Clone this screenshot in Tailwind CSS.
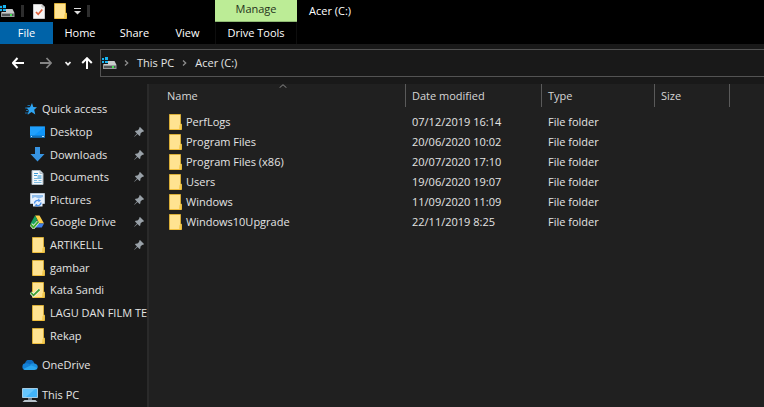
<!DOCTYPE html>
<html lang="en">
<head>
  <meta charset="UTF-8" />
  <meta name="viewport" content="width=device-width, initial-scale=1.0" />
  <title>Acer (C:)</title>
  <script src="https://cdn.jsdelivr.net/npm/@tailwindcss/browser@4"></script>
</head>
<body class="flex h-screen flex-col overflow-hidden bg-[#191919] font-['Open_Sans',sans-serif] text-[11px] leading-4 text-[#e4e4e4]">

  <!-- Shared icons -->
  <svg class="hidden" aria-hidden="true">
    <symbol id="folder" viewBox="0 0 13 16">
      <path d="M.5 .5H11.500V10L12.500 10.500V15.500H.5Z" fill="#ffe391" stroke="#d9ae38" />
      <path d="M10.500 11L12.500 9.500V15.500H10Z" fill="#f3c94e" />
      <path d="M1 15.500H12" stroke="#f0be3c" />
    </symbol>
    <symbol id="pin" viewBox="0 0 10 10">
      <path d="M6 0L10 4L9 5L8.300 4.700L6.500 6.500L6.300 8.500L5.500 9L3.500 7L.5 9.800L.2 9.500L3 6.500L1 4.500L1.500 3.700L3.500 3.500L5.300 1.700L5 1Z" fill="#99a1a8" />
    </symbol>
    <symbol id="drive" viewBox="0 0 15 13">
      <path d="M4 4H12.500L14.500 8H1Z" fill="#c9cbcc" />
      <path d="M1 8H14.500V12H1Z" fill="#97999b" />
      <path d="M2 9H13.500V11H2Z" fill="#4f5355" />
      <path d="M10 9H12V11H10Z" fill="#41e052" />
      <path d="M0 0H6V7H0Z" fill="#12181b" />
      <path d="M0 1H2V3H0ZM3 0H6V3H3ZM0 4H2V6H0ZM3 4H6V6H3Z" fill="#16b4f2" />
    </symbol>
    <symbol id="chevron" viewBox="0 0 5 6">
      <path d="M1 .5L3.700 3L1 5.500" fill="none" stroke="#8d8d8d" stroke-width="1.300" />
    </symbol>
  </svg>

  <header class="flex h-11 shrink-0 bg-black">
    <div class="flex w-[215px] flex-col">
      <div class="flex h-[22px] items-center">
        <svg class="h-[13px] w-[15px]"><use href="#drive" /></svg>
        <span class="ml-1.5 h-3 w-[3px] bg-[#2d2d2d]"></span>
        <button class="ml-[9px]" aria-label="Properties">
          <svg class="block h-[15px] w-3" viewBox="0 0 12 15">
            <path d="M.5 .5H9L11.500 3V14.500H.5Z" fill="#f5f5f5" stroke="#c8c8c8" />
            <path d="M9 .5V3H11.500" fill="none" stroke="#b5b5b5" />
            <path d="M3 8L5.200 10.300L9.300 5.500" fill="none" stroke="#e0603a" stroke-width="1.700" />
          </svg>
        </button>
        <button class="ml-[9px]" aria-label="New folder">
          <svg class="block h-4 w-[13px]"><use href="#folder" /></svg>
        </button>
        <button class="ml-[7px]" aria-label="Customize Quick Access Toolbar">
          <svg class="block h-[7px] w-[7px]" viewBox="0 0 7 7">
            <path d="M0 .5H7" stroke="#ddd" />
            <path d="M0 3H7L3.500 6.500Z" fill="#ddd" />
          </svg>
        </button>
        <span class="ml-1.5 h-3 w-[3px] bg-[#2d2d2d]"></span>
      </div>
      <div class="flex h-[22px] items-stretch text-white">
        <button class="w-[53px] bg-[#0063a8]">File</button>
        <button class="w-[54px]">Home</button>
        <button class="w-[55px]">Share</button>
        <button class="w-[51px]">View</button>
      </div>
    </div>
    <div class="flex w-[82px] flex-col">
      <button class="h-[22px] border-b border-[#8fb974] bg-[#bcec96] pb-[3px] text-[#26331c]">Manage</button>
      <button class="h-[22px] border-x border-[#0e0e0e] text-white">Drive Tools</button>
    </div>
    <h1 class="pt-[3px] pl-3 text-white">Acer (C:)</h1>
  </header>

  <div class="flex h-10 shrink-0 items-center pt-[5px] pb-[7px]">
    <div class="flex w-[100px] items-center pl-3">
      <button aria-label="Back">
        <svg class="block h-3 w-3" viewBox="0 0 12 12"><path d="M12 6H1M5.500 1L.9 6L5.500 11" fill="none" stroke="#fff" stroke-width="2" /></svg>
      </button>
      <button class="ml-4" aria-label="Forward">
        <svg class="block h-3 w-3" viewBox="0 0 12 12"><path d="M0 6H11M6.500 1L11.100 6L6.500 11" fill="none" stroke="#858585" stroke-width="1.800" /></svg>
      </button>
      <button class="ml-[13px]" aria-label="Recent locations">
        <svg class="block h-[5px] w-1.5" viewBox="0 0 6 5"><path d="M.5 1L3 3.700L5.500 1" fill="none" stroke="#eee" stroke-width="1.700" /></svg>
      </button>
      <button class="ml-2.5" aria-label="Up">
        <svg class="block h-3 w-3" viewBox="0 0 12 12"><path d="M6 12V1.200M1.200 6L6 1.200L10.800 6" fill="none" stroke="#fff" stroke-width="2" /></svg>
      </button>
    </div>
    <nav class="flex h-7 flex-1 items-center border-y border-l border-[#535353] pl-px" aria-label="Address">
      <svg class="h-[13px] w-[15px]"><use href="#drive" /></svg>
      <svg class="ml-[7px] h-1.5 w-[5px]"><use href="#chevron" /></svg>
      <a href="#" class="ml-2">This PC</a>
      <svg class="ml-2 h-1.5 w-[5px]"><use href="#chevron" /></svg>
      <a href="#" class="ml-2">Acer (C:)</a>
    </nav>
  </div>

  <div class="flex min-h-0 flex-1">
    <aside class="w-[149px] shrink-0 overflow-hidden border-r-2 border-[#2a2a2a] pt-3.5">
      <ul class="grid h-[249px] auto-rows-fr items-center">
        <li>
          <a href="#" class="flex items-center pl-[25px]">
            <svg class="h-3 w-3" viewBox="0 0 12 12">
              <path d="M7 0L8.300 3.900L12 4.200L9.200 6.800L10.300 11.500L6.500 9.100L2.700 11.800L3.900 7.300L1.200 4.800L5 4.200Z" fill="#2fa5f2" />
              <path d="M0 5H3M1 7.500H3.500M0 10H3M2.500 2.500H5" stroke="#1a6ba5" />
            </svg>
            <span class="ml-[5px]">Quick access</span>
          </a>
        </li>
        <li>
          <a href="#" class="flex items-center pr-0.5 pl-[30px]">
            <svg class="h-3 w-[15px]" viewBox="0 0 15 12">
              <path d="M0 .5H15V11.500H0Z" fill="#0f96fb" />
              <path d="M0 .5H15L4 9.500H0Z" fill="#2ba6ff" fill-opacity=".6" />
              <path d="M0 10.500H15" stroke="#1272bd" stroke-width="2" />
              <path d="M1 10.500H2M12 10.500H14" stroke="#b9e2ff" />
            </svg>
            <span class="ml-[5px] flex-1">Desktop</span>
            <svg class="mr-px h-2.5 w-2.5"><use href="#pin" /></svg>
          </a>
        </li>
        <li>
          <a href="#" class="flex items-center pr-0.5 pl-[30px]">
            <svg class="h-[15px] w-[15px]" viewBox="0 0 15 15"><path d="M5 0H10V7H14.500L7.500 14.500L.5 7H5Z" fill="#3794e2" /></svg>
            <span class="ml-[5px] flex-1">Downloads</span>
            <svg class="mr-px h-2.5 w-2.5"><use href="#pin" /></svg>
          </a>
        </li>
        <li>
          <a href="#" class="flex items-center pr-0.5 pl-[30px]">
            <svg class="h-[15px] w-[15px]" viewBox="0 0 15 15">
              <path d="M2 .5H10L13 3.500V14.500H2Z" fill="#f4f8fb" stroke="#a9b6c0" />
              <path d="M10 .5V3.500H13" fill="#d3dce3" stroke="#a9b6c0" />
              <path d="M4 3.500H8M4 5.500H7" stroke="#3d9bd7" />
              <path d="M7.500 5H11.500V8H7.500Z" fill="#8cc4e6" />
              <path d="M4 8.500H11.500M4 10.500H7M8.500 10.500H11.500M4 12.500H11.500" stroke="#7dbbe0" />
            </svg>
            <span class="ml-[5px] flex-1">Documents</span>
            <svg class="mr-px h-2.5 w-2.5"><use href="#pin" /></svg>
          </a>
        </li>
        <li>
          <a href="#" class="flex items-center pr-0.5 pl-[30px]">
            <svg class="h-3.5 w-[15px]" viewBox="0 0 15 14">
              <path d="M.5 .5H14.500V10.500H.5Z" fill="#e9f1fb" stroke="#b7c4d2" />
              <path d="M2 2H13V4L9 5.500L5 4L2 5.500Z" fill="#8fbdec" />
              <path d="M3 6H12.500V13.500H3Z" fill="#e6f0fc" />
              <path d="M4.500 10.500A3.200 3.200 0 0 1 8.500 7.500M11 9.500A3.200 3.200 0 0 1 7 12.500" fill="none" stroke="#4a8fe8" stroke-width="1.400" />
              <path d="M8 5.700L11 7.500L8.500 9.200ZM7.500 14L4.500 12.300L7 10.800Z" fill="#4a8fe8" />
            </svg>
            <span class="ml-[5px] flex-1">Pictures</span>
            <svg class="mr-px h-2.5 w-2.5"><use href="#pin" /></svg>
          </a>
        </li>
        <li>
          <a href="#" class="flex items-center pr-0.5 pl-[30px]">
            <svg class="h-3.5 w-[15px]" viewBox="0 0 15 14">
              <path d="M5 .5H9.500L14 8.500H9.500Z" fill="#ffcf48" />
              <path d="M5 .5L7.300 4.500L3 12.500L.5 8.500Z" fill="#16a05d" />
              <path d="M5.500 8.500H14L11.800 12.500H3Z" fill="#3e7ee8" />
              <path d="M.8 9.500L3.500 12.300L8.500 6.500" fill="none" stroke="#e9f5e4" stroke-width="3.400" />
              <path d="M.8 9.500L3.500 12.300L8.500 6.500" fill="none" stroke="#3fa82c" stroke-width="1.900" />
            </svg>
            <span class="ml-[5px] flex-1">Google Drive</span>
            <svg class="mr-px h-2.5 w-2.5"><use href="#pin" /></svg>
          </a>
        </li>
        <li>
          <a href="#" class="flex items-center pr-0.5 pl-8">
            <svg class="h-4 w-[13px]"><use href="#folder" /></svg>
            <span class="ml-[5px] flex-1">ARTIKELLL</span>
            <svg class="mr-px h-2.5 w-2.5"><use href="#pin" /></svg>
          </a>
        </li>
        <li>
          <a href="#" class="flex items-center pl-8">
            <svg class="h-4 w-[13px]"><use href="#folder" /></svg>
            <span class="ml-[5px]">gambar</span>
          </a>
        </li>
        <li>
          <a href="#" class="flex items-center pl-[30px]">
            <svg class="h-4 w-[15px]" viewBox="0 0 15 16">
              <use href="#folder" x="2" width="13" height="16" />
              <path d="M.8 10.500L3.500 13.300L9.500 7.500" fill="none" stroke="#f1f8e8" stroke-width="3.200" />
              <path d="M.8 10.500L3.500 13.300L9.500 7.500" fill="none" stroke="#3f9e32" stroke-width="1.800" />
            </svg>
            <span class="ml-[5px]">Kata Sandi</span>
          </a>
        </li>
        <li>
          <a href="#" class="flex items-center pl-8">
            <svg class="h-4 w-[13px] shrink-0"><use href="#folder" /></svg>
            <span class="ml-[5px] overflow-hidden whitespace-nowrap">LAGU DAN FILM TE</span>
          </a>
        </li>
        <li>
          <a href="#" class="flex items-center pl-8">
            <svg class="h-4 w-[13px]"><use href="#folder" /></svg>
            <span class="ml-[5px]">Rekap</span>
          </a>
        </li>
      </ul>
      <a href="#" class="mt-[3px] flex h-[30px] items-center pl-[22px]">
        <svg class="h-2.5 w-4" viewBox="0 0 16 10">
          <path d="M3 5A4.700 4.700 0 0 1 12.300 3.500L9 7Z" fill="#0f6cbd" />
          <path d="M3.500 10A3.300 3.300 0 0 1 4 3.300Q6 3 8 4.600L12 7L9 10Z" fill="#1482d8" />
          <path d="M8 4.600Q10 3 12.500 3.400A3.400 3.400 0 0 1 15.500 8L11 8Z" fill="#1b90e0" />
          <path d="M1.500 9L9 5.300L15.500 8Q15 10 12.500 10H3.500Q2 10 1.500 9Z" fill="#2ba7ee" />
        </svg>
        <span class="ml-1">OneDrive</span>
      </a>
      <a href="#" class="flex h-[30px] items-center pl-[22px]">
        <svg class="h-3.5 w-4" viewBox="0 0 16 14">
          <path d="M.5 .5H15.500V9.500H.5Z" fill="#42b5fb" stroke="#a5cbe2" />
          <path d="M1 1H13L4 9H1Z" fill="#7fd2ff" fill-opacity=".6" />
          <path d="M6 10H10V12H6Z" fill="#71808c" />
          <path d="M2.500 12H13.500L15.500 14H.5Z" fill="#b6c1ca" />
        </svg>
        <span class="ml-1">This PC</span>
      </a>
    </aside>

    <main class="min-w-0 flex-1 bg-[#202020]">
      <table class="w-full table-fixed border-separate border-spacing-0 text-left">
        <colgroup>
          <col class="w-[257px]" />
          <col class="w-[136px]" />
          <col class="w-[113px]" />
          <col class="w-[75px]" />
          <col />
        </colgroup>
        <thead>
          <tr class="h-[23px] text-[#d6d6d6]">
            <th class="border-r border-[#5a5a5a] pl-3 font-normal">
              <div class="relative px-1.5">
                Name
                <svg class="absolute -top-1 left-1/2 h-1 w-2 -translate-x-1/2" viewBox="0 0 8 4"><path d="M.5 3.800L4 .7L7.500 3.800" fill="none" stroke="#8a8a8a" /></svg>
              </div>
            </th>
            <th class="border-r border-[#5a5a5a] pl-1.5 font-normal">Date modified</th>
            <th class="border-r border-[#5a5a5a] pl-1.5 font-normal">Type</th>
            <th class="border-r border-[#5a5a5a] pl-1.5 font-normal">Size</th>
            <td></td>
          </tr>
        </thead>
        <tbody>
          <tr class="h-[5px]"><td colspan="5"></td></tr>
          <tr class="h-5">
            <td class="pl-5"><a href="#" class="flex items-center gap-1"><svg class="h-4 w-[13px]"><use href="#folder" /></svg>PerfLogs</a></td>
            <td class="pl-1.5">07/12/2019 16:14</td>
            <td class="pl-1.5">File folder</td>
            <td></td>
            <td></td>
          </tr>
          <tr class="h-5">
            <td class="pl-5"><a href="#" class="flex items-center gap-1"><svg class="h-4 w-[13px]"><use href="#folder" /></svg>Program Files</a></td>
            <td class="pl-1.5">20/06/2020 10:02</td>
            <td class="pl-1.5">File folder</td>
            <td></td>
            <td></td>
          </tr>
          <tr class="h-5">
            <td class="pl-5"><a href="#" class="flex items-center gap-1"><svg class="h-4 w-[13px]"><use href="#folder" /></svg>Program Files (x86)</a></td>
            <td class="pl-1.5">20/07/2020 17:10</td>
            <td class="pl-1.5">File folder</td>
            <td></td>
            <td></td>
          </tr>
          <tr class="h-5">
            <td class="pl-5"><a href="#" class="flex items-center gap-1"><svg class="h-4 w-[13px]"><use href="#folder" /></svg>Users</a></td>
            <td class="pl-1.5">19/06/2020 19:07</td>
            <td class="pl-1.5">File folder</td>
            <td></td>
            <td></td>
          </tr>
          <tr class="h-5">
            <td class="pl-5"><a href="#" class="flex items-center gap-1"><svg class="h-4 w-[13px]"><use href="#folder" /></svg>Windows</a></td>
            <td class="pl-1.5">11/09/2020 11:09</td>
            <td class="pl-1.5">File folder</td>
            <td></td>
            <td></td>
          </tr>
          <tr class="h-5">
            <td class="pl-5"><a href="#" class="flex items-center gap-1"><svg class="h-4 w-[13px]"><use href="#folder" /></svg>Windows10Upgrade</a></td>
            <td class="pl-1.5">22/11/2019 8:25</td>
            <td class="pl-1.5">File folder</td>
            <td></td>
            <td></td>
          </tr>
        </tbody>
      </table>
    </main>
  </div>
</body>
</html>
